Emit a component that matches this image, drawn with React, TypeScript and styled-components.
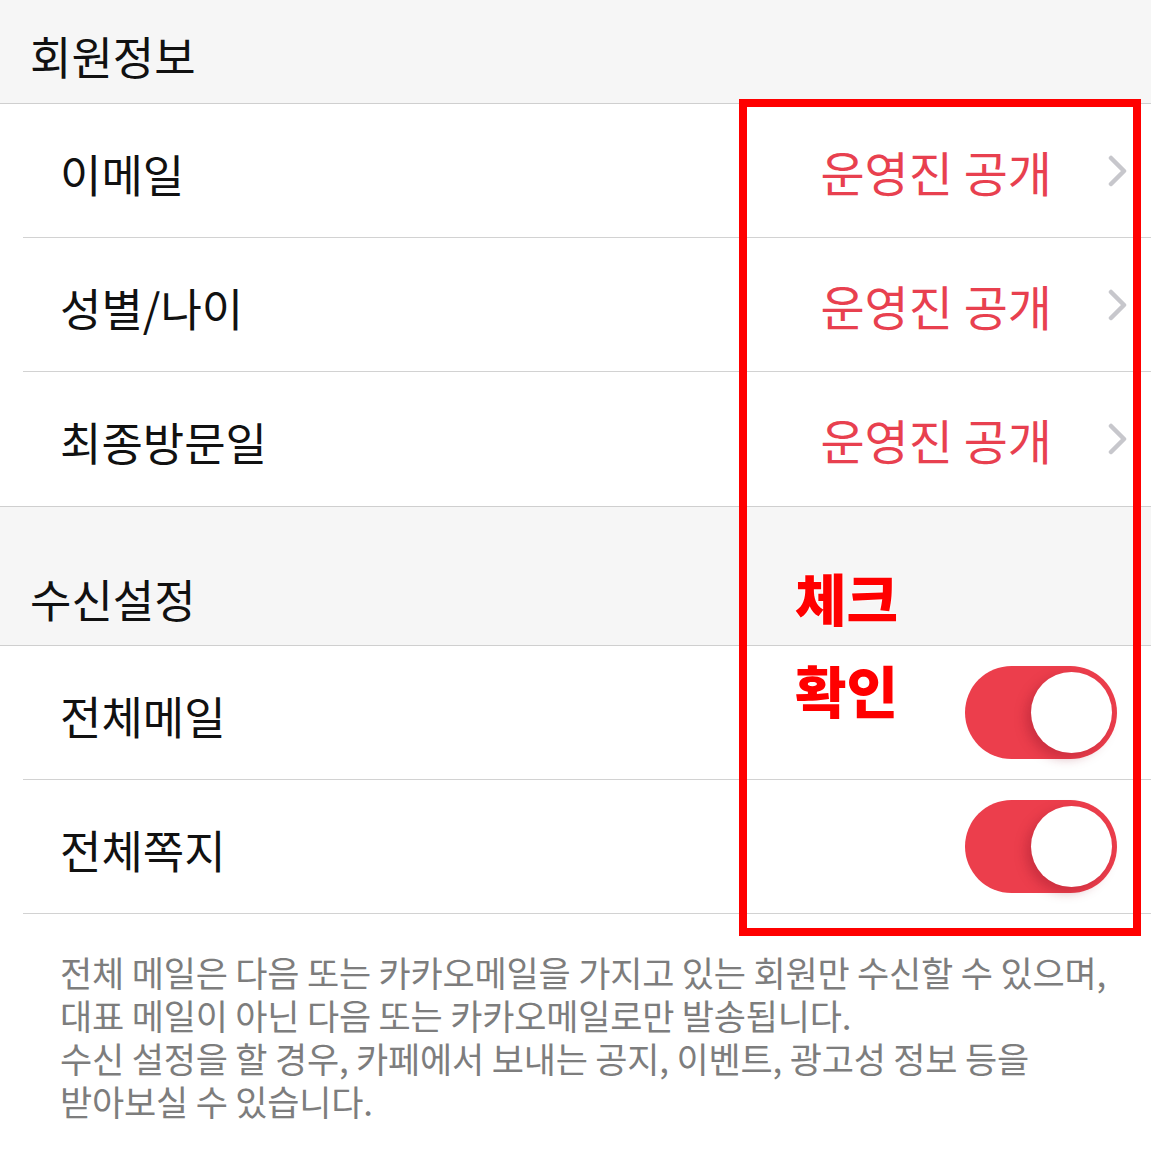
import React from 'react';
import styled, { createGlobalStyle } from 'styled-components';

const GlobalStyle = createGlobalStyle`
  html, body {
    margin: 0;
    padding: 0;
    background: #ffffff;
    font-family: "Noto Sans CJK KR", "Noto Sans", sans-serif;
  }
`;

const Page = styled.div`
  position: relative;
  width: 1151px;
  min-height: 1151px;
  background: #ffffff;
`;

const SectionHeader = styled.div<{ $height: number; $bottom: number; $first?: boolean }>`
  display: flex;
  align-items: flex-end;
  height: ${p => p.$height}px;
  padding: 0 0 ${p => p.$bottom}px 30px;
  box-sizing: border-box;
  background: #f6f6f6;
  border-top: 1px solid ${p => (p.$first ? 'transparent' : '#cfcfcf')};
  border-bottom: 1px solid #cfcfcf;
  font-size: 45px;
  color: #111;
  line-height: 1;
`;

const Row = styled.div<{ $last?: boolean }>`
  display: flex;
  align-items: center;
  justify-content: space-between;
  height: 134px;
  margin-left: 23px;
  padding: 6px 24px 0 37px;
  box-sizing: border-box;
  border-bottom: 1px solid ${p => (p.$last ? 'transparent' : '#d2d2d2')};
`;

const Label = styled.span`
  font-size: 45px;
  color: #111;
  line-height: 1;
`;

const ValueBox = styled.div`
  display: flex;
  align-items: center;
  gap: 56px;
  margin-top: -6px;
`;

const Value = styled.span`
  font-size: 48px;
  color: #e8404f;
  line-height: 1;
`;

const Chevron = () => (
  <svg width="19" height="32" viewBox="0 0 19 32">
    <path d="M3 3 L16 16 L3 29" fill="none" stroke="#c7c7cc" strokeWidth="4.5" strokeLinecap="round" strokeLinejoin="round" />
  </svg>
);

const Track = styled.div`
  position: relative;
  width: 152px;
  height: 93px;
  border-radius: 47px;
  background: #ec3e4c;
  margin-right: 10px;
  margin-top: -6px;
`;

const Knob = styled.div`
  position: absolute;
  right: 5px;
  top: 6px;
  width: 81px;
  height: 81px;
  border-radius: 50%;
  background: #ffffff;
  box-shadow: -5px 5px 12px rgba(140, 20, 40, 0.35);
`;

const Toggle = () => (
  <Track>
    <Knob />
  </Track>
);

const Footer = styled.div`
  padding: 36px 30px 40px 60px;
  font-size: 35px;
  line-height: 43px;
  color: #7d7d7d;
  letter-spacing: -0.2px;
  white-space: nowrap;
`;

const Highlight = styled.div`
  position: absolute;
  left: 739px;
  top: 99px;
  width: 402px;
  height: 837px;
  box-sizing: border-box;
  border: 8px solid #ff0000;
  pointer-events: none;
`;

const Note = styled.span<{ $top: number }>`
  position: absolute;
  left: 48px;
  top: ${p => p.$top}px;
  font-size: 56px;
  font-weight: 900;
  line-height: 1;
  color: #ff0000;
  text-shadow: 0 0 3px #fff, 0 0 2px #fff;
`;

const infoRows = ['이메일', '성별/나이', '최종방문일'];
const toggleRows = ['전체메일', '전체쪽지'];

export default function App() {
  return (
    <Page>
      <GlobalStyle />
      <SectionHeader $height={104} $bottom={25} $first>회원정보</SectionHeader>
      {infoRows.map((label, i) => (
        <Row key={label} $last={i === infoRows.length - 1}>
          <Label>{label}</Label>
          <ValueBox>
            <Value>운영진 공개</Value>
            <Chevron />
          </ValueBox>
        </Row>
      ))}
      <SectionHeader $height={140} $bottom={24}>수신설정</SectionHeader>
      {toggleRows.map(label => (
        <Row key={label}>
          <Label>{label}</Label>
          <Toggle />
        </Row>
      ))}
      <Footer>
        전체 메일은 다음 또는 카카오메일을 가지고 있는 회원만 수신할 수 있으며,
        <br />
        대표 메일이 아닌 다음 또는 카카오메일로만 발송됩니다.
        <br />
        수신 설정을 할 경우, 카페에서 보내는 공지, 이벤트, 광고성 정보 등을
        <br />
        받아보실 수 있습니다.
      </Footer>
      <Highlight>
        <Note $top={462}>체크</Note>
        <Note $top={554}>확인</Note>
      </Highlight>
    </Page>
  );
}
